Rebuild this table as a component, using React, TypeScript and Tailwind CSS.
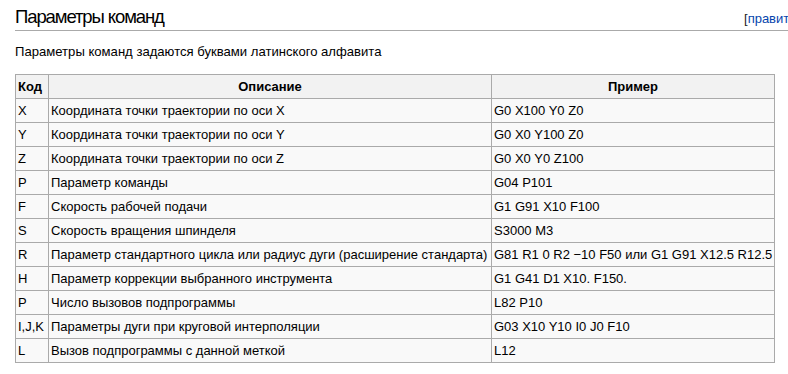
const rows: [string, string, string][] = [
  ['X', 'Координата точки траектории по оси X', 'G0 X100 Y0 Z0'],
  ['Y', 'Координата точки траектории по оси Y', 'G0 X0 Y100 Z0'],
  ['Z', 'Координата точки траектории по оси Z', 'G0 X0 Y0 Z100'],
  ['P', 'Параметр команды', 'G04 P101'],
  ['F', 'Скорость рабочей подачи', 'G1 G91 X10 F100'],
  ['S', 'Скорость вращения шпинделя', 'S3000 M3'],
  ['R', 'Параметр стандартного цикла или радиус дуги (расширение стандарта)', 'G81 R1 0 R2 −10 F50 или G1 G91 X12.5 R12.5'],
  ['H', 'Параметр коррекции выбранного инструмента', 'G1 G41 D1 X10. F150.'],
  ['P', 'Число вызовов подпрограммы', 'L82 P10'],
  ['I,J,K', 'Параметры дуги при круговой интерполяции', 'G03 X10 Y10 I0 J0 F10'],
  ['L', 'Вызов подпрограммы с данной меткой', 'L12'],
];

export default function App() {
  return (
    <div className="w-[788px] h-[374px] overflow-hidden bg-white text-black font-['Liberation_Sans',Arial,sans-serif]">
      <div className="w-[820px] pl-[15px]">
        {/* Section heading */}
        <div className="flex items-end h-[31px] border-b border-[#aaaaaa]">
          <h2 className="w-[729px] text-[18.5px] tracking-[-1.1px] leading-[26px] text-black">Параметры команд</h2>
          <span className="text-[13px] leading-[26px] self-start mt-[6px] text-[#0645ad] whitespace-nowrap">
            <span className="text-[#222]">[</span>править<span className="text-[#222]">]</span>
          </span>
        </div>

        <p className="mt-[12px] text-[13.1px] leading-[18px]">Параметры команд задаются буквами латинского алфавита</p>

        {/* Parameters table */}
        <table className="mt-[13px] w-[760px] table-fixed border-collapse border border-[#aaaaaa] bg-[#f9f9f9] text-[13px]">
          <colgroup>
            <col className="w-[33px]" />
            <col className="w-[443px]" />
            <col />
          </colgroup>
          <thead>
            <tr className="h-[24px] bg-[#f2f2f2]">
              <th className="border border-[#aaaaaa] px-[2px] text-left font-bold">Код</th>
              <th className="border border-[#aaaaaa] px-[2px] text-center font-bold">Описание</th>
              <th className="border border-[#aaaaaa] px-[2px] text-center font-bold">Пример</th>
            </tr>
          </thead>
          <tbody>
            {rows.map(([code, desc, example], i) => (
              <tr key={i} className="h-[24px]">
                <td className="border border-[#aaaaaa] px-[2px] whitespace-nowrap">{code}</td>
                <td className="border border-[#aaaaaa] px-[2px] whitespace-nowrap">{desc}</td>
                <td className="border border-[#aaaaaa] px-[2px] whitespace-nowrap">{example}</td>
              </tr>
            ))}
          </tbody>
        </table>
      </div>
    </div>
  );
}
